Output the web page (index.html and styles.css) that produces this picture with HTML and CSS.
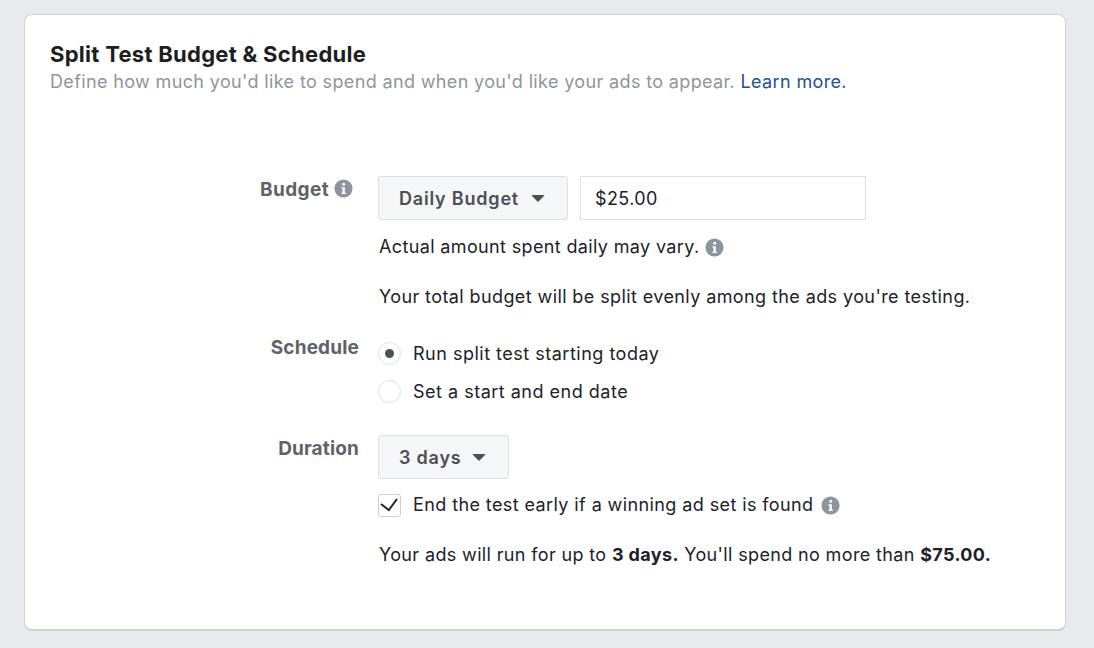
FILE: index.html
```html
<!DOCTYPE html>
<html lang="en">
<head>
<meta charset="utf-8">
<title>Split Test Budget &amp; Schedule</title>
<link rel="stylesheet" href="styles.css">
</head>
<body>
<section class="card">
  <h1 class="title">Split Test Budget &amp; Schedule</h1>
  <p class="subtitle">Define how much you'd like to spend and when you'd like your ads to appear. <a class="link" href="#">Learn more.</a></p>
  <div class="form">
    <div class="row row-budget">
      <div class="label">Budget <svg class="info" viewBox="0 0 20 20"><circle cx="10" cy="10" r="9.5"/><circle class="glyph" cx="10.2" cy="5.6" r="1.6"/><path class="glyph" d="M7.8 8.6h3.6v6h1.2v1.3H7.8v-1.3h1.1V9.9H7.8z"/></svg></div>
      <div class="content">
        <div class="controls">
          <button class="select select-budget">Daily Budget <span class="caret"></span></button>
          <div class="input">$25.00</div>
        </div>
        <p class="text tight note-a">Actual amount spent daily may vary. <svg class="info" viewBox="0 0 20 20"><circle cx="10" cy="10" r="9.5"/><circle class="glyph" cx="10.2" cy="5.6" r="1.6"/><path class="glyph" d="M7.8 8.6h3.6v6h1.2v1.3H7.8v-1.3h1.1V9.9H7.8z"/></svg></p>
        <p class="text note-b">Your total budget will be split evenly among the ads you're testing.</p>
      </div>
    </div>
    <div class="row row-schedule">
      <div class="label">Schedule</div>
      <div class="content options">
        <div class="option"><span class="radio radio-on"></span><span class="text wide">Run split test starting today</span></div>
        <div class="option"><span class="radio"></span><span class="text wide">Set a start and end date</span></div>
      </div>
    </div>
    <div class="row row-duration">
      <div class="label">Duration</div>
      <div class="content">
        <button class="select select-days">3 days <span class="caret"></span></button>
        <div class="option option-check"><span class="check"><svg viewBox="0 0 21 21"><path d="M2 9l7.8 6L18 4"/></svg></span><span class="text">End the test early if a winning ad set is found</span><svg class="info" viewBox="0 0 20 20"><circle cx="10" cy="10" r="9.5"/><circle class="glyph" cx="10.2" cy="5.6" r="1.6"/><path class="glyph" d="M7.8 8.6h3.6v6h1.2v1.3H7.8v-1.3h1.1V9.9H7.8z"/></svg></div>
        <p class="text tight note-c">Your ads will run for up to <b>3 days.</b> You'll spend no more than <b>$75.00.</b></p>
      </div>
    </div>
  </div>
</section>
</body>
</html>
```
FILE: styles.css
```css
* { box-sizing: border-box; }
html, body { height: 100%; }
body {
  margin: 0;
  padding: 14px 28px 17px 24px;
  background: #e9eaed;
  font-family: Inter, "Liberation Sans", sans-serif;
  color: #1d2129;
  overflow: hidden;
}
.card {
  height: 617px;
  background: #fff;
  border: 1px solid #cfd0d3;
  border-bottom-width: 2px;
  border-radius: 8px;
  padding: 25px 25px 0;
}
.title { margin: 0; font-size: 22px; line-height: 28px; font-weight: 700; letter-spacing: .28px; color: #1c1e21; }
.subtitle { margin: 0; font-size: 18px; line-height: 24px; letter-spacing: .36px; color: #90949c; padding-top: 2px; }
.link { color: #23508f; text-decoration: none; }
.form { margin-top: 82px; }
.row { display: flex; }
.label {
  width: 309px;
  margin-right: 19px;
  flex: none;
  text-align: right;
  font-size: 19px;
  line-height: 24px;
  font-weight: 700;
  letter-spacing: .15px;
  color: #5f6368;
}
.row-budget .label { padding-top: 2px; padding-right: 6px; letter-spacing: .4px; }
.row-schedule .label { margin-top: -6px; }
.row-duration .label { padding-top: 2px; }
.content { flex: 1; min-width: 0; }
.controls { display: flex; gap: 12px; }
.select {
  height: 44px;
  display: inline-flex;
  align-items: center;
  gap: 12px;
  padding: 0 20px;
  border: 1px solid #dddfe2;
  border-radius: 3px;
  background: #f5f6f7;
  font: 600 18px Inter, "Liberation Sans", sans-serif;
  letter-spacing: .8px;
  color: #4b4f56;
  white-space: nowrap;
}
.select-budget { width: 190px; }
.select-days { width: 131px; gap: 10px; }
.caret { width: 0; height: 0; border: 7.5px solid transparent; border-top: 7px solid #4b4f56; border-bottom: 0; border-radius: 2px; }
.input {
  width: 286px;
  height: 44px;
  padding: 0 14px;
  border: 1px solid #dddfe2;
  font-size: 18px;
  line-height: 43px;
  letter-spacing: .4px;
}
.text { margin: 0; font-size: 18px; line-height: 24px; letter-spacing: .4px; color: #1d2129; }
.tight { letter-spacing: .36px; }
.wide { letter-spacing: .5px; }
.note-a { margin-top: 15px; margin-left: 1px; display: flex; align-items: center; gap: 6px; }
.note-b { margin-top: 26px; margin-left: 1px; }
.info { width: 19px; height: 19px; vertical-align: -2px; flex: none; }
.info circle { fill: #8d949e; }
.info .glyph { fill: #fff; }
.row-schedule { margin-top: 33px; }
.option { display: flex; align-items: center; gap: 12px; }
.options { display: flex; flex-direction: column; gap: 14px; }
.radio { width: 23px; height: 23px; border: 1px solid #dddfe2; border-radius: 50%; background: #fff; position: relative; flex: none; margin-top: -1px; }
.radio-on::after { content: ""; position: absolute; left: 6px; top: 6px; width: 9px; height: 9px; border-radius: 50%; background: #4b4f56; }
.row-duration { margin-top: 31px; }
.check { width: 23px; height: 23px; border: 1px solid #ccd0d5; border-radius: 3px; flex: none; display: flex; }
.check svg { width: 21px; height: 21px; fill: none; stroke: #1d2129; stroke-width: 2; }
.option-check { margin-top: 14px; }
.option-check .info { margin-left: -5px; }
.note-c { margin-top: 26px; margin-left: 1px; }
.note-c b { font-weight: 700; }
```
